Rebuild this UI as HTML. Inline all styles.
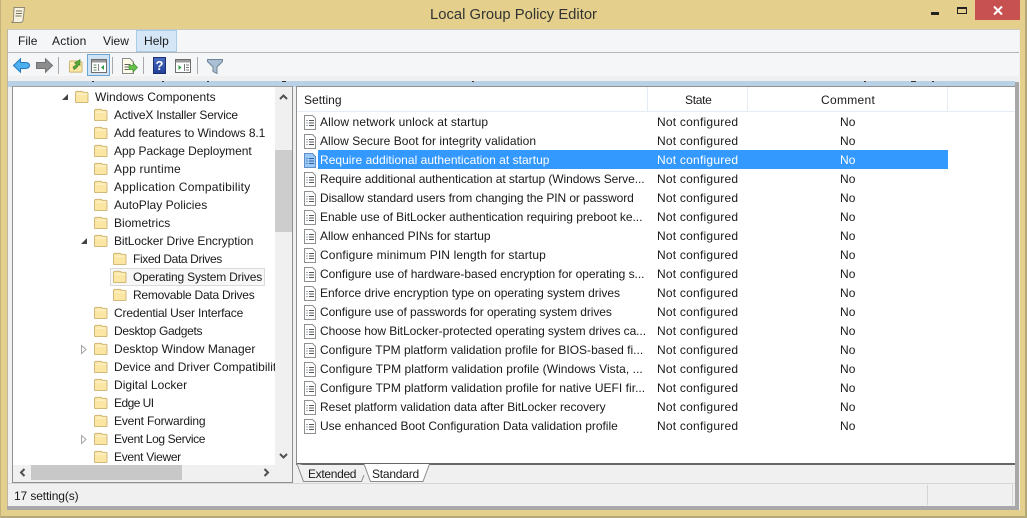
<!DOCTYPE html>
<html><head><meta charset="utf-8"><style>
html,body{margin:0;padding:0}
body{width:1027px;height:518px;position:relative;overflow:hidden;background:#e4d08c;font-family:"Liberation Sans",sans-serif;font-size:12px;color:#1a1a1a}
.a{position:absolute}
.t{position:absolute;white-space:nowrap;line-height:18px;height:18px;letter-spacing:.03px}
.n{letter-spacing:.23px}
svg{position:absolute;overflow:visible}
.sep{position:absolute;top:57px;width:1px;height:17px;background:#a9a9a9}
</style></head><body>
<svg width="0" height="0" style="position:absolute"><defs>
<symbol id="f" viewBox="0 0 16 14"><path d="M1.500 13V2.500L2.500 1.500H9L10 2.500H14.500L15 3.500V13L14.500 13.500H2Z" fill="#fbe6a4" stroke="#cdb574"/><path d="M2.500 4.500H14" stroke="#fff6d8"/></symbol>
<symbol id="d" viewBox="0 0 14 16"><path d="M1.500 1.500H9.500L12.500 4.500V15.500H1.500Z" fill="#fff" stroke="#8f8f8f"/><path d="M3.500 6.500h1M3.500 9h1M3.500 11.500h1" stroke="#44607e"/><path d="M6 6.500h5M6 9h5M6 11.500h5" stroke="#555"/></symbol>
<symbol id="ds" viewBox="0 0 14 16"><path d="M1.500 1.500H9.500L12.500 4.500V15.500H1.500Z" fill="#9cc8f5" stroke="#5f8fc8"/><path d="M3.500 6.500h1M3.500 9h1M3.500 11.500h1" stroke="#1f5fa8"/><path d="M6 6.500h5M6 9h5M6 11.500h5" stroke="#2a62a8"/></symbol>
</defs></svg>

<!-- title bar -->
<svg style="left:10px;top:6px" width="17" height="18" viewBox="0 0 17 18"><path d="M4 1.500H14.500L13 14.500Q12.500 16.500 10 16.500H1.500Q4 15.500 3.500 13Z" fill="#f6f1e0" stroke="#8f8a78"/><path d="M6 5h6M6 7.500h6M5.500 10h6" stroke="#77735f"/></svg>
<div class="a" style="left:0;top:6px;width:1027px;text-align:center;font-size:14.800px;line-height:18px;color:#333">Local Group Policy Editor</div>
<div class="a" style="left:931px;top:12px;width:8px;height:3px;background:#222"></div>
<div class="a" style="left:957px;top:7px;height:4px;border:1px solid #222;border-top-width:2px;width:8px"></div>
<div class="a" style="left:975px;top:0;width:45px;height:20px;background:#c75050"></div>
<svg style="left:993px;top:6px" width="10" height="9"><path d="M1 .5L9 8.500M9 .5L1 8.500" stroke="#fff" stroke-width="2"/></svg>

<!-- client -->
<div class="a" style="left:7px;top:29px;width:1013px;height:481px;background:#f0f0f0;box-sizing:border-box;border-top:1px solid #c9c9c0;border-left:1px solid #bdb79f"></div>
<div class="a" style="left:8px;top:30px;width:1011px;height:22px;background:#f5f6f7"></div>
<div class="a" style="left:8px;top:52px;width:1011px;height:1px;background:#b4b4b4"></div>
<div class="a" style="left:8px;top:53px;width:1011px;height:23px;background:#f5f6f7"></div>
<div class="a" style="left:136px;top:30px;width:41px;height:22px;box-sizing:border-box;background:#d5e6f6;border:1px solid #a9cce8"></div>
<div class="t" style="left:18px;top:32px">File</div>
<div class="t" style="left:52px;top:32px;letter-spacing:.2px">Action</div>
<div class="t" style="left:103px;top:32px">View</div>
<div class="t" style="left:144px;top:32px">Help</div>

<!-- toolbar -->
<svg style="left:13px;top:58px" width="17" height="15"><path d="M.5 7.500L7.500 .8V4.500L12 4.500Q16.500 4.500 16.500 7.500Q16.500 10.500 12 10.500H7.500V14.200Z" fill="#4fb0f0" stroke="#1f78c0"/></svg>
<svg style="left:36px;top:58px" width="17" height="15"><path d="M16.500 7.500L9.500 .8V4.500H.5V10.500H9.500V14.200Z" fill="#8d8d8d" stroke="#727272"/></svg>
<div class="sep" style="left:58px"></div>
<svg style="left:68px;top:58px" width="16" height="15"><use href="#f" width="15" height="14" y="1"/><path d="M5 9Q7 8 8.500 6L6.500 5L12 1.500L12 7.500L10.500 6.500Q9.500 10 6 11.500Z" fill="#58a838" stroke="#3b7f24" stroke-width=".6"/></svg>
<div class="a" style="left:87px;top:54px;width:23px;height:22px;box-sizing:border-box;background:#cfe3f5;border:1px solid #6aa6d6"></div>
<svg style="left:91px;top:59px" width="16" height="14"><rect x=".5" y=".5" width="15" height="13" fill="#fff" stroke="#6d6d6d"/><rect x="1" y="1" width="14" height="2.500" fill="#9a9a9a"/><path d="M2.500 6h3M2.500 8.500h3M2.500 11h3" stroke="#5b8a5a"/><path d="M7.500 5V12" stroke="#888"/><path d="M13 6L10 8.500L13 11Z" fill="#2f9a4a"/></svg>
<div class="sep" style="left:112px"></div>
<svg style="left:121px;top:58px" width="17" height="16"><path d="M1.500.5H9L12.500 4V15.500H1.500Z" fill="#fdfbe8" stroke="#8a8a8a"/><path d="M3.500 6.500h6M3.500 9h4M3.500 11.500h4" stroke="#666"/><path d="M8 7.500h4V5l4.500 4.500L12 14v-2.500H8z" fill="#66c04a" stroke="#3f8f2f" stroke-width=".7"/></svg>
<div class="sep" style="left:143px"></div>
<div class="a" style="left:153px;top:57px;width:13px;height:17px;background:linear-gradient(#4a6cc0,#23409a);border:1px solid #1b2f72;box-sizing:border-box;color:#fff;font:bold 13px/15px 'Liberation Sans',sans-serif;text-align:center">?</div>
<svg style="left:175px;top:59px" width="16" height="14"><rect x=".5" y=".5" width="15" height="13" fill="#fff" stroke="#6d6d6d"/><rect x="1" y="1" width="14" height="2.500" fill="#9a9a9a"/><path d="M11 6h3M11 8.500h3M11 11h3" stroke="#777"/><path d="M9.500 5V12" stroke="#777"/><path d="M3.500 6L6.500 8.500L3.500 11Z" fill="#2f9a4a"/></svg>
<div class="sep" style="left:197px"></div>
<svg style="left:207px;top:58px" width="16" height="16"><path d="M.5 1.500H15.500V3.500L10 9V15.500L6 13.500V9L.5 3.500Z" fill="#a9c0d4" stroke="#6f8496"/></svg>

<!-- strip above panes -->
<div class="a" style="left:8px;top:76px;width:1011px;height:6px;background:#f0f0f0"></div>
<div class="a" style="left:8px;top:81px;width:1007px;height:6px;background:#b9d1e7"></div>
<div class="a" style="left:92px;top:81px;width:2px;height:1px;background:#333"></div>
<div class="a" style="left:162px;top:81px;width:2px;height:1px;background:#333"></div>
<div class="a" style="left:207px;top:81px;width:2px;height:1px;background:#333"></div>
<div class="a" style="left:282px;top:81px;width:4px;height:1px;background:#333"></div>
<div class="a" style="left:472px;top:81px;width:2px;height:1px;background:#333"></div>
<div class="a" style="left:864px;top:81px;width:2px;height:1px;background:#333"></div>
<div class="a" style="left:911px;top:81px;width:5px;height:1px;background:#333"></div>
<div class="a" style="left:932px;top:81px;width:2px;height:1px;background:#333"></div>

<!-- tree pane -->
<div class="a" style="left:12px;top:86px;width:281px;height:397px;box-sizing:border-box;background:#fff;border:1px solid #8f8f8f;border-top:1px solid #a0a0a0"></div>
<div class="a" style="left:275px;top:87px;width:17px;height:378px;background:#f0f0f0"></div>
<div class="a" style="left:275px;top:150px;width:17px;height:82px;background:#cdcdcd"></div>
<svg style="left:279px;top:94px" width="10" height="6"><path d="M1 5L4.500 1.500L8 5" fill="none" stroke="#505050" stroke-width="2"/></svg>
<svg style="left:279px;top:453px" width="10" height="6"><path d="M1 1L4.500 4.500L8 1" fill="none" stroke="#505050" stroke-width="2"/></svg>
<div class="a" style="left:13px;top:465px;width:279px;height:17px;background:#f0f0f0"></div>
<div class="a" style="left:31px;top:465px;width:151px;height:15px;background:#c8c8c8"></div>
<svg style="left:19px;top:468px" width="7" height="10"><path d="M5.500 1L2 4.500L5.500 8" fill="none" stroke="#505050" stroke-width="2"/></svg>
<svg style="left:263px;top:468px" width="7" height="10"><path d="M1.500 1L5 4.500L1.500 8" fill="none" stroke="#505050" stroke-width="2"/></svg>

<!-- tree items -->
<svg style="left:62px;top:93px" width="7" height="8"><path d="M6 1V7H0Z" fill="#444"/></svg>
<svg style="left:74px;top:90px" width="15" height="13"><use href="#f" width="15" height="13"/></svg><div class="t" style="left:95px;top:88px">Windows Components</div>
<svg style="left:93px;top:108px" width="15" height="13"><use href="#f" width="15" height="13"/></svg><div class="t" style="left:114px;top:106px;letter-spacing:-.22px">ActiveX Installer Service</div>
<svg style="left:93px;top:126px" width="15" height="13"><use href="#f" width="15" height="13"/></svg><div class="t" style="left:114px;top:124px;letter-spacing:-.08px">Add features to Windows 8.1</div>
<svg style="left:93px;top:144px" width="15" height="13"><use href="#f" width="15" height="13"/></svg><div class="t" style="left:114px;top:142px;letter-spacing:-.05px">App Package Deployment</div>
<svg style="left:93px;top:162px" width="15" height="13"><use href="#f" width="15" height="13"/></svg><div class="t" style="left:114px;top:160px;letter-spacing:.2px">App runtime</div>
<svg style="left:93px;top:180px" width="15" height="13"><use href="#f" width="15" height="13"/></svg><div class="t" style="left:114px;top:178px;letter-spacing:.23px">Application Compatibility</div>
<svg style="left:93px;top:198px" width="15" height="13"><use href="#f" width="15" height="13"/></svg><div class="t" style="left:114px;top:196px">AutoPlay Policies</div>
<svg style="left:93px;top:216px" width="15" height="13"><use href="#f" width="15" height="13"/></svg><div class="t" style="left:114px;top:214px">Biometrics</div>
<svg style="left:81px;top:237px" width="7" height="8"><path d="M6 1V7H0Z" fill="#444"/></svg>
<svg style="left:93px;top:234px" width="15" height="13"><use href="#f" width="15" height="13"/></svg><div class="t" style="left:114px;top:232px;letter-spacing:-.08px">BitLocker Drive Encryption</div>
<svg style="left:112px;top:252px" width="15" height="13"><use href="#f" width="15" height="13"/></svg><div class="t" style="left:133px;top:250px;letter-spacing:-.38px">Fixed Data Drives</div>
<div class="a" style="left:110px;top:268px;width:155px;height:18px;box-sizing:border-box;background:#f7f7f7;border:1px solid #dadada"></div>
<svg style="left:112px;top:270px" width="15" height="13"><use href="#f" width="15" height="13"/></svg><div class="t" style="left:133px;top:268px;letter-spacing:-.19px">Operating System Drives</div>
<svg style="left:112px;top:288px" width="15" height="13"><use href="#f" width="15" height="13"/></svg><div class="t" style="left:133px;top:286px;letter-spacing:-.25px">Removable Data Drives</div>
<svg style="left:93px;top:306px" width="15" height="13"><use href="#f" width="15" height="13"/></svg><div class="t" style="left:114px;top:304px;letter-spacing:-.17px">Credential User Interface</div>
<svg style="left:93px;top:324px" width="15" height="13"><use href="#f" width="15" height="13"/></svg><div class="t" style="left:114px;top:322px;letter-spacing:-.3px">Desktop Gadgets</div>
<svg style="left:81px;top:345px" width="6" height="10"><path d="M.5.500L5 4.500L.5 8.500Z" fill="#fff" stroke="#a6a6a6"/></svg>
<svg style="left:93px;top:342px" width="15" height="13"><use href="#f" width="15" height="13"/></svg><div class="t" style="left:114px;top:340px">Desktop Window Manager</div>
<svg style="left:93px;top:360px" width="15" height="13"><use href="#f" width="15" height="13"/></svg><div class="t" style="left:114px;top:358px;width:161px;overflow:hidden">Device and Driver Compatibility</div>
<svg style="left:93px;top:378px" width="15" height="13"><use href="#f" width="15" height="13"/></svg><div class="t" style="left:114px;top:376px">Digital Locker</div>
<svg style="left:93px;top:396px" width="15" height="13"><use href="#f" width="15" height="13"/></svg><div class="t" style="left:114px;top:394px;letter-spacing:-.55px">Edge UI</div>
<svg style="left:93px;top:414px" width="15" height="13"><use href="#f" width="15" height="13"/></svg><div class="t" style="left:114px;top:412px;letter-spacing:-.17px">Event Forwarding</div>
<svg style="left:81px;top:435px" width="6" height="10"><path d="M.5.500L5 4.500L.5 8.500Z" fill="#fff" stroke="#a6a6a6"/></svg>
<svg style="left:93px;top:432px" width="15" height="13"><use href="#f" width="15" height="13"/></svg><div class="t" style="left:114px;top:430px;letter-spacing:-.37px">Event Log Service</div>
<svg style="left:93px;top:450px" width="15" height="13"><use href="#f" width="15" height="13"/></svg><div class="t" style="left:114px;top:448px;letter-spacing:-.3px">Event Viewer</div>

<!-- right pane -->
<div class="a" style="left:296px;top:86px;width:720px;height:379px;box-sizing:border-box;background:#fff;border:1px solid #8f8f8f;border-bottom:2px solid #666"></div>
<div class="a" style="left:1015px;top:82px;width:4px;height:424px;background:#a8a8a8"></div>
<div class="a" style="left:297px;top:111px;width:718px;height:1px;background:#e5ecf3"></div>
<div class="a" style="left:647px;top:87px;width:1px;height:24px;background:#e5ecf3"></div>
<div class="a" style="left:747px;top:87px;width:1px;height:24px;background:#e5ecf3"></div>
<div class="a" style="left:947px;top:87px;width:1px;height:24px;background:#e5ecf3"></div>
<div class="t" style="left:304px;top:91px">Setting</div>
<div class="t" style="left:685px;top:91px;letter-spacing:-.3px">State</div>
<div class="t" style="left:821px;top:91px;letter-spacing:.3px">Comment</div>
<div class="a" style="left:318px;top:150px;width:630px;height:19px;background:#3399ff"></div>

<svg style="left:303px;top:114px" width="14" height="16"><use href="#d" width="14" height="16"/></svg><div class="t" style="left:320px;top:113px;letter-spacing:.09px">Allow network unlock at startup</div><div class="t n" style="left:657px;top:113px">Not configured</div><div class="t" style="left:840px;top:113px">No</div>
<svg style="left:303px;top:133px" width="14" height="16"><use href="#d" width="14" height="16"/></svg><div class="t" style="left:320px;top:132px">Allow Secure Boot for integrity validation</div><div class="t n" style="left:657px;top:132px">Not configured</div><div class="t" style="left:840px;top:132px">No</div>
<svg style="left:303px;top:152px" width="14" height="16"><use href="#ds" width="14" height="16"/></svg><div class="t" style="left:320px;top:151px;color:#fff">Require additional authentication at startup</div><div class="t n" style="left:657px;top:151px;color:#fff">Not configured</div><div class="t" style="left:840px;top:151px;color:#fff">No</div>
<svg style="left:303px;top:171px" width="14" height="16"><use href="#d" width="14" height="16"/></svg><div class="t" style="left:320px;top:170px;letter-spacing:-.07px">Require additional authentication at startup (Windows Serve...</div><div class="t n" style="left:657px;top:170px">Not configured</div><div class="t" style="left:840px;top:170px">No</div>
<svg style="left:303px;top:190px" width="14" height="16"><use href="#d" width="14" height="16"/></svg><div class="t" style="left:320px;top:189px;letter-spacing:-.09px">Disallow standard users from changing the PIN or password</div><div class="t n" style="left:657px;top:189px">Not configured</div><div class="t" style="left:840px;top:189px">No</div>
<svg style="left:303px;top:209px" width="14" height="16"><use href="#d" width="14" height="16"/></svg><div class="t" style="left:320px;top:208px;letter-spacing:-.04px">Enable use of BitLocker authentication requiring preboot ke...</div><div class="t n" style="left:657px;top:208px">Not configured</div><div class="t" style="left:840px;top:208px">No</div>
<svg style="left:303px;top:228px" width="14" height="16"><use href="#d" width="14" height="16"/></svg><div class="t" style="left:320px;top:227px;letter-spacing:-.03px">Allow enhanced PINs for startup</div><div class="t n" style="left:657px;top:227px">Not configured</div><div class="t" style="left:840px;top:227px">No</div>
<svg style="left:303px;top:247px" width="14" height="16"><use href="#d" width="14" height="16"/></svg><div class="t" style="left:320px;top:246px;letter-spacing:.13px">Configure minimum PIN length for startup</div><div class="t n" style="left:657px;top:246px">Not configured</div><div class="t" style="left:840px;top:246px">No</div>
<svg style="left:303px;top:266px" width="14" height="16"><use href="#d" width="14" height="16"/></svg><div class="t" style="left:320px;top:265px;letter-spacing:-.04px">Configure use of hardware-based encryption for operating s...</div><div class="t n" style="left:657px;top:265px">Not configured</div><div class="t" style="left:840px;top:265px">No</div>
<svg style="left:303px;top:285px" width="14" height="16"><use href="#d" width="14" height="16"/></svg><div class="t" style="left:320px;top:284px;letter-spacing:-.04px">Enforce drive encryption type on operating system drives</div><div class="t n" style="left:657px;top:284px">Not configured</div><div class="t" style="left:840px;top:284px">No</div>
<svg style="left:303px;top:304px" width="14" height="16"><use href="#d" width="14" height="16"/></svg><div class="t" style="left:320px;top:303px;letter-spacing:-.08px">Configure use of passwords for operating system drives</div><div class="t n" style="left:657px;top:303px">Not configured</div><div class="t" style="left:840px;top:303px">No</div>
<svg style="left:303px;top:323px" width="14" height="16"><use href="#d" width="14" height="16"/></svg><div class="t" style="left:320px;top:322px;letter-spacing:-.07px">Choose how BitLocker-protected operating system drives ca...</div><div class="t n" style="left:657px;top:322px">Not configured</div><div class="t" style="left:840px;top:322px">No</div>
<svg style="left:303px;top:342px" width="14" height="16"><use href="#d" width="14" height="16"/></svg><div class="t" style="left:320px;top:341px;letter-spacing:.01px">Configure TPM platform validation profile for BIOS-based fi...</div><div class="t n" style="left:657px;top:341px">Not configured</div><div class="t" style="left:840px;top:341px">No</div>
<svg style="left:303px;top:361px" width="14" height="16"><use href="#d" width="14" height="16"/></svg><div class="t" style="left:320px;top:360px;letter-spacing:.05px">Configure TPM platform validation profile (Windows Vista, ...</div><div class="t n" style="left:657px;top:360px">Not configured</div><div class="t" style="left:840px;top:360px">No</div>
<svg style="left:303px;top:380px" width="14" height="16"><use href="#d" width="14" height="16"/></svg><div class="t" style="left:320px;top:379px">Configure TPM platform validation profile for native UEFI fir...</div><div class="t n" style="left:657px;top:379px">Not configured</div><div class="t" style="left:840px;top:379px">No</div>
<svg style="left:303px;top:399px" width="14" height="16"><use href="#d" width="14" height="16"/></svg><div class="t" style="left:320px;top:398px;letter-spacing:-.06px">Reset platform validation data after BitLocker recovery</div><div class="t n" style="left:657px;top:398px">Not configured</div><div class="t" style="left:840px;top:398px">No</div>
<svg style="left:303px;top:418px" width="14" height="16"><use href="#d" width="14" height="16"/></svg><div class="t" style="left:320px;top:417px;letter-spacing:-.02px">Use enhanced Boot Configuration Data validation profile</div><div class="t n" style="left:657px;top:417px">Not configured</div><div class="t" style="left:840px;top:417px">No</div>

<!-- tabs -->
<svg style="left:296px;top:464px" width="140" height="20"><path d="M1 0L7.500 17.500H65.500L68 11" fill="#f0f0f0" stroke="#8a8a8a"/><path d="M68 0L74.500 17.500H127L133.500 0" fill="#fff" stroke="#8a8a8a"/></svg>
<div class="t" style="left:308px;top:465px;letter-spacing:-.32px">Extended</div>
<div class="t" style="left:372px;top:465px;letter-spacing:-.22px">Standard</div>

<!-- status bar -->
<div class="a" style="left:8px;top:483px;width:1007px;height:1px;background:#d6d6d6"></div>
<div class="a" style="left:927px;top:485px;width:1px;height:20px;background:#d4d4d4"></div>
<div class="a" style="left:1012px;top:485px;width:1px;height:20px;background:#d4d4d4"></div>
<div class="t" style="left:14px;top:487px;letter-spacing:-.12px">17 setting(s)</div>
<div class="a" style="left:7px;top:506px;width:1012px;height:4px;background:#a8a8a8"></div>
<div class="a" style="left:0;top:516px;width:1027px;height:2px;background:#b5a878"></div>
<div class="a" style="left:1025px;top:0;width:2px;height:518px;background:#b5a878"></div>
<div class="a" style="left:0;top:0;width:1px;height:518px;background:#c4b27a"></div>
</body></html>
